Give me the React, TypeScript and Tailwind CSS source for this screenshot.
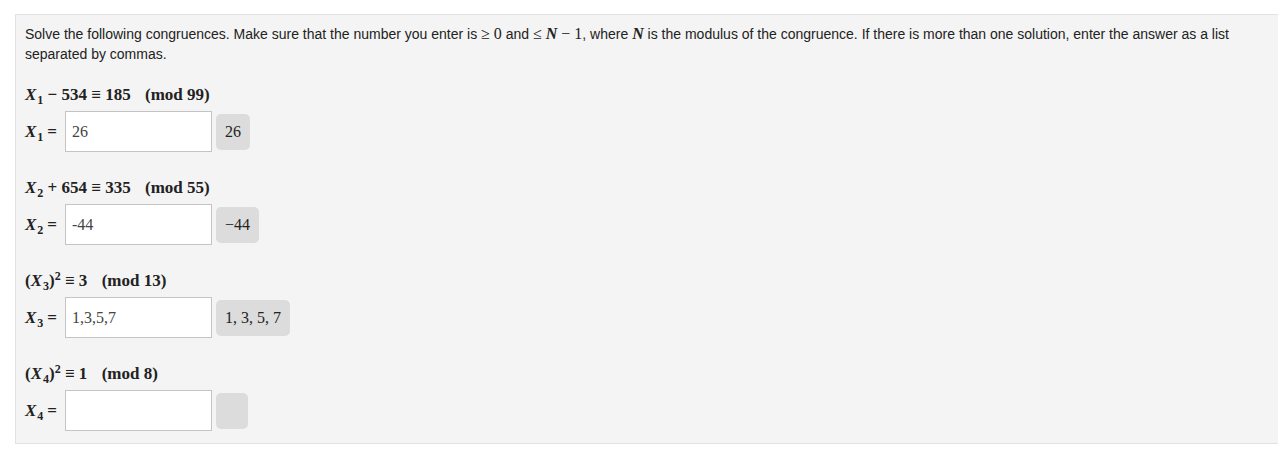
import React from "react";

const serif = { fontFamily: '"Liberation Serif", "DejaVu Serif", serif' };

function XVar({ n }: { n: string }) {
  return (
    <span className="font-bold whitespace-nowrap">
      <i>X</i>
      <span className="not-italic text-[12px] relative top-[4px] ml-[1px]">{n}</span>
    </span>
  );
}

function Block({ eq, n, value, out }: { eq: React.ReactNode; n: string; value: string; out: string }) {
  return (
    <div className="mt-[23px] first:mt-[18px]">
      <div className="h-[26px] flex items-center text-[17px] text-[#222]" style={serif}>
        {eq}
      </div>
      <div className="flex items-center mt-[3px]">
        <div className="text-[17px] text-[#222] w-[40px] whitespace-nowrap" style={serif}>
          <XVar n={n} />
          <span className="font-bold ml-[4px]">=</span>
        </div>
        <div className="w-[147px] h-[41px] bg-white border border-[#c4c4c4] flex items-center pl-[6px] text-[16px] text-[#444]" style={serif}>
          {value}
        </div>
        <div className="ml-[4px] h-[36px] min-w-[32px] px-[9px] rounded-[5px] bg-[#dcdcdc] flex items-center text-[16px] text-[#222]" style={serif}>
          {out}
        </div>
      </div>
    </div>
  );
}

export default function App() {
  return (
    <div className="bg-white w-[1278px] h-[452px] pt-[14px] pl-[15px]">
      <div className="bg-[#f4f4f4] border border-[#e2e2e2] border-r-0 h-[430px] pl-[9px] pt-[9px]" style={{ fontFamily: '"Liberation Sans", Arial, sans-serif' }}>
        <p className="text-[14px] leading-[20px] text-[#222] pr-[8px]">
          Solve the following congruences. Make sure that the number you enter is{" "}
          <span style={serif} className="text-[16px]">≥ 0</span> and{" "}
          <span style={serif} className="text-[16px]">≤ <i className="font-bold">N</i> − 1</span>, where{" "}
          <span style={serif} className="text-[16px] italic font-bold">N</span> is the modulus of the congruence. If there is more than one solution, enter the answer as a list separated by commas.
        </p>
        <div>
          <Block
            eq={<span className="font-bold"><XVar n="1" /> − 534 ≡ 185 <span className="ml-[10px]">(mod 99)</span></span>}
            n="1"
            value="26"
            out="26"
          />
          <Block
            eq={<span className="font-bold"><XVar n="2" /> + 654 ≡ 335 <span className="ml-[10px]">(mod 55)</span></span>}
            n="2"
            value="-44"
            out="−44"
          />
          <Block
            eq={<span className="font-bold">(<XVar n="3" />)<sup className="text-[12px]">2</sup> ≡ 3 <span className="ml-[10px]">(mod 13)</span></span>}
            n="3"
            value="1,3,5,7"
            out="1, 3, 5, 7"
          />
          <Block
            eq={<span className="font-bold">(<XVar n="4" />)<sup className="text-[12px]">2</sup> ≡ 1 <span className="ml-[10px]">(mod 8)</span></span>}
            n="4"
            value=""
            out=""
          />
        </div>
      </div>
    </div>
  );
}
